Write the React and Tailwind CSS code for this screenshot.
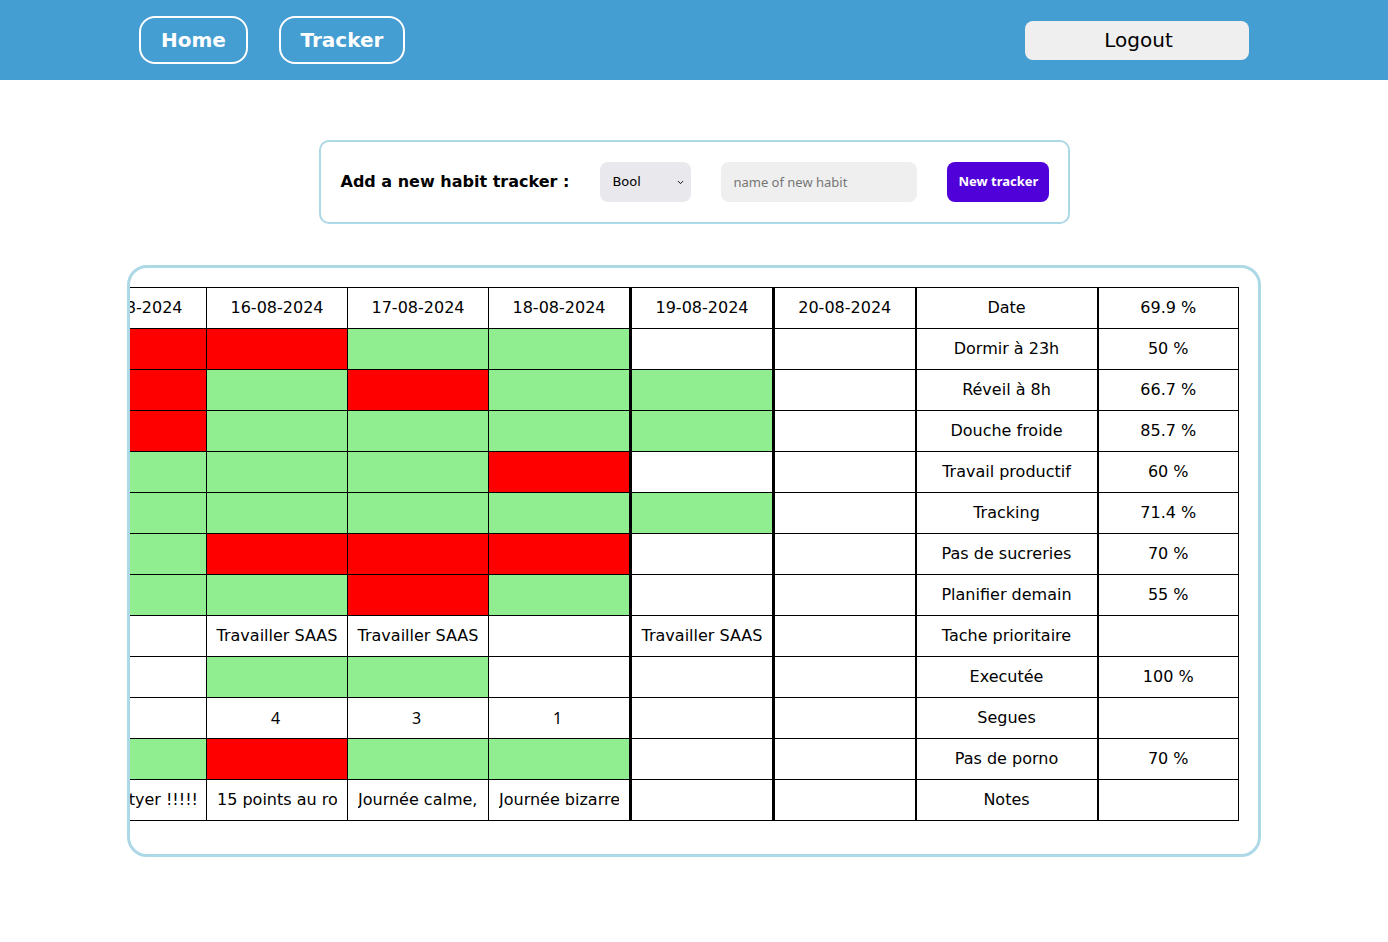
import { ChevronDown } from "lucide-react";

const DATES = [
  "13-08-2024",
  "14-08-2024",
  "15-08-2024",
  "16-08-2024",
  "17-08-2024",
  "18-08-2024",
  "19-08-2024",
  "20-08-2024",
];

const COL_W = ["w-[141px]", "w-[141px]", "w-[141px]", "w-[141px]", "w-[141px]", "w-[142px]", "w-[143px]", "w-[142px]"];

// one entry per date column, "R" = failed, "G" = done, "" = empty
const ROWS = [
  { name: "Dormir à 23h", pct: "50 %", cells: ["G", "R", "R", "R", "G", "G", "", ""] },
  { name: "Réveil à 8h", pct: "66.7 %", cells: ["G", "G", "R", "G", "R", "G", "G", ""] },
  { name: "Douche froide", pct: "85.7 %", cells: ["G", "G", "R", "G", "G", "G", "G", ""] },
  { name: "Travail productif", pct: "60 %", cells: ["R", "G", "G", "G", "G", "R", "", ""] },
  { name: "Tracking", pct: "71.4 %", cells: ["R", "R", "G", "G", "G", "G", "G", ""] },
  { name: "Pas de sucreries", pct: "70 %", cells: ["G", "G", "G", "R", "R", "R", "", ""] },
  { name: "Planifier demain", pct: "55 %", cells: ["R", "G", "G", "G", "R", "G", "", ""] },
  {
    name: "Tache prioritaire",
    pct: "",
    kind: "text",
    cells: ["Travailler SAAS", "", "", "Travailler SAAS", "Travailler SAAS", "", "Travailler SAAS", ""],
  },
  { name: "Executée", pct: "100 %", cells: ["G", "", "", "G", "G", "", "", ""] },
  { name: "Segues", pct: "", kind: "num", cells: ["2", "5", "", "4", "3", "1", "", ""] },
  { name: "Pas de porno", pct: "70 %", cells: ["G", "G", "G", "R", "G", "G", "", ""] },
  {
    name: "Notes",
    pct: "",
    kind: "note",
    cells: [
      "Rien de spécial",
      "Fatigué mais ok",
      "Grosse journée, tyer !!!!!",
      "15 points au rouge, bien joué",
      "Journée calme, rien à signaler",
      "Journée bizarre",
      "",
      "",
    ],
  },
];

const FONT = { fontFamily: '"DejaVu Sans", sans-serif' };
const UI_FONT = { fontFamily: '"Noto Sans", "Open Sans", sans-serif' };

// border tweaks for the "today" columns
const colBorder = (i) => {
  if (i === 6) return "border-l-[3px] border-r-[3px]";
  if (i === 7) return "border-l-[3px]";
  return "";
};

function Cell({ value, kind, i }) {
  const base = `border border-black h-[41px] p-0 text-center ${colBorder(i)}`;

  if (!kind) {
    const bg = value === "R" ? "bg-[#ff0000]" : value === "G" ? "bg-[#90ee90]" : "bg-white";
    return <td className={`${base} ${bg}`} />;
  }

  if (kind === "num") {
    return (
      <td className={`${base} text-[16px] pr-[3px]`} style={UI_FONT}>
        {value}
      </td>
    );
  }

  if (kind === "note") {
    // the third column is scrolled so the end of its text shows
    if (i === 2) {
      return (
        <td className={`${base} pl-[10px] pr-[8px]`}>
          <div className="flex justify-end overflow-hidden whitespace-nowrap">
            <span className="shrink-0">{value}</span>
          </div>
        </td>
      );
    }
    return (
      <td className={`${base} px-[10px]`}>
        <div className="overflow-hidden whitespace-nowrap">{value}</div>
      </td>
    );
  }

  return <td className={`${base} whitespace-nowrap overflow-hidden`}>{value}</td>;
}

export default function App() {
  return (
    <div className="min-h-[942px] bg-white" style={FONT}>
      {/* Top bar */}
      <header className="h-[80px] bg-[#449ed2] flex items-center justify-between px-[139px]">
        <nav className="flex items-center gap-[31px]">
          <button className="w-[109px] h-[48px] rounded-[16px] border-2 border-white text-white text-[20px] font-bold">
            Home
          </button>
          <button className="w-[126px] h-[48px] rounded-[16px] border-2 border-white text-white text-[20px] font-bold">
            Tracker
          </button>
        </nav>
        <button className="w-[224px] h-[39px] rounded-[8px] bg-[#efefef] text-black text-[20px] pl-[3px]">
          Logout
        </button>
      </header>

      {/* New tracker form */}
      <div className="mt-[60px] mx-auto w-[751px] h-[84px] border-2 border-[#add8e6] rounded-[10px] flex items-center pl-[20px] gap-[30px]">
        <span className="text-[16px] font-bold text-black mr-[1px]">Add a new habit tracker :</span>
        <div className="relative w-[91px] h-[40px]">
          <select className="appearance-none w-full h-full rounded-[8px] bg-[#e9e9ed] pl-[12px] text-[13px] text-black outline-none">
            <option>Bool</option>
            <option>Text</option>
            <option>Number</option>
          </select>
          <ChevronDown
            className="absolute right-[6px] top-[16px] w-[9px] h-[9px] text-black pointer-events-none"
            strokeWidth={2.5}
          />
        </div>
        <input
          className="w-[196px] h-[40px] rounded-[8px] bg-[#efefef] px-[12px] text-[13px] outline-none placeholder:text-[#757575]"
          style={UI_FONT}
          placeholder="name of new habit"
        />
        <button
          className="w-[102px] h-[40px] rounded-[8px] bg-[#5000d8] text-white text-[13px] font-bold"
          style={UI_FONT}
        >
          New tracker
        </button>
      </div>

      {/* Tracker table */}
      <div className="mt-[41px] mx-auto w-[1134px] h-[592px] border-[3px] border-[#add8e6] rounded-[20px] overflow-hidden">
        <div className="flex justify-end pt-[19px] pr-[19px]">
          <table className="table-fixed w-[1455px] border-collapse shrink-0 text-[16px] text-black">
            <colgroup>
              {COL_W.map((w, i) => (
                <col key={i} className={w} />
              ))}
              <col className="w-[182px]" />
              <col className="w-[141px]" />
            </colgroup>
            <tbody>
              <tr>
                {DATES.map((d, i) => (
                  <td
                    key={d}
                    className={`border border-black h-[41px] p-0 text-center whitespace-nowrap overflow-hidden ${colBorder(i)}`}
                  >
                    {d}
                  </td>
                ))}
                <td className="border border-black border-l-2 h-[41px] p-0 text-center">Date</td>
                <td className="border border-black border-l-2 h-[41px] p-0 text-center">69.9 %</td>
              </tr>
              {ROWS.map((row) => (
                <tr key={row.name}>
                  {row.cells.map((v, i) => (
                    <Cell key={i} value={v} kind={row.kind} i={i} />
                  ))}
                  <td className="border border-black border-l-2 h-[41px] p-0 text-center">{row.name}</td>
                  <td className="border border-black border-l-2 h-[41px] p-0 text-center">{row.pct}</td>
                </tr>
              ))}
            </tbody>
          </table>
        </div>
      </div>
    </div>
  );
}
